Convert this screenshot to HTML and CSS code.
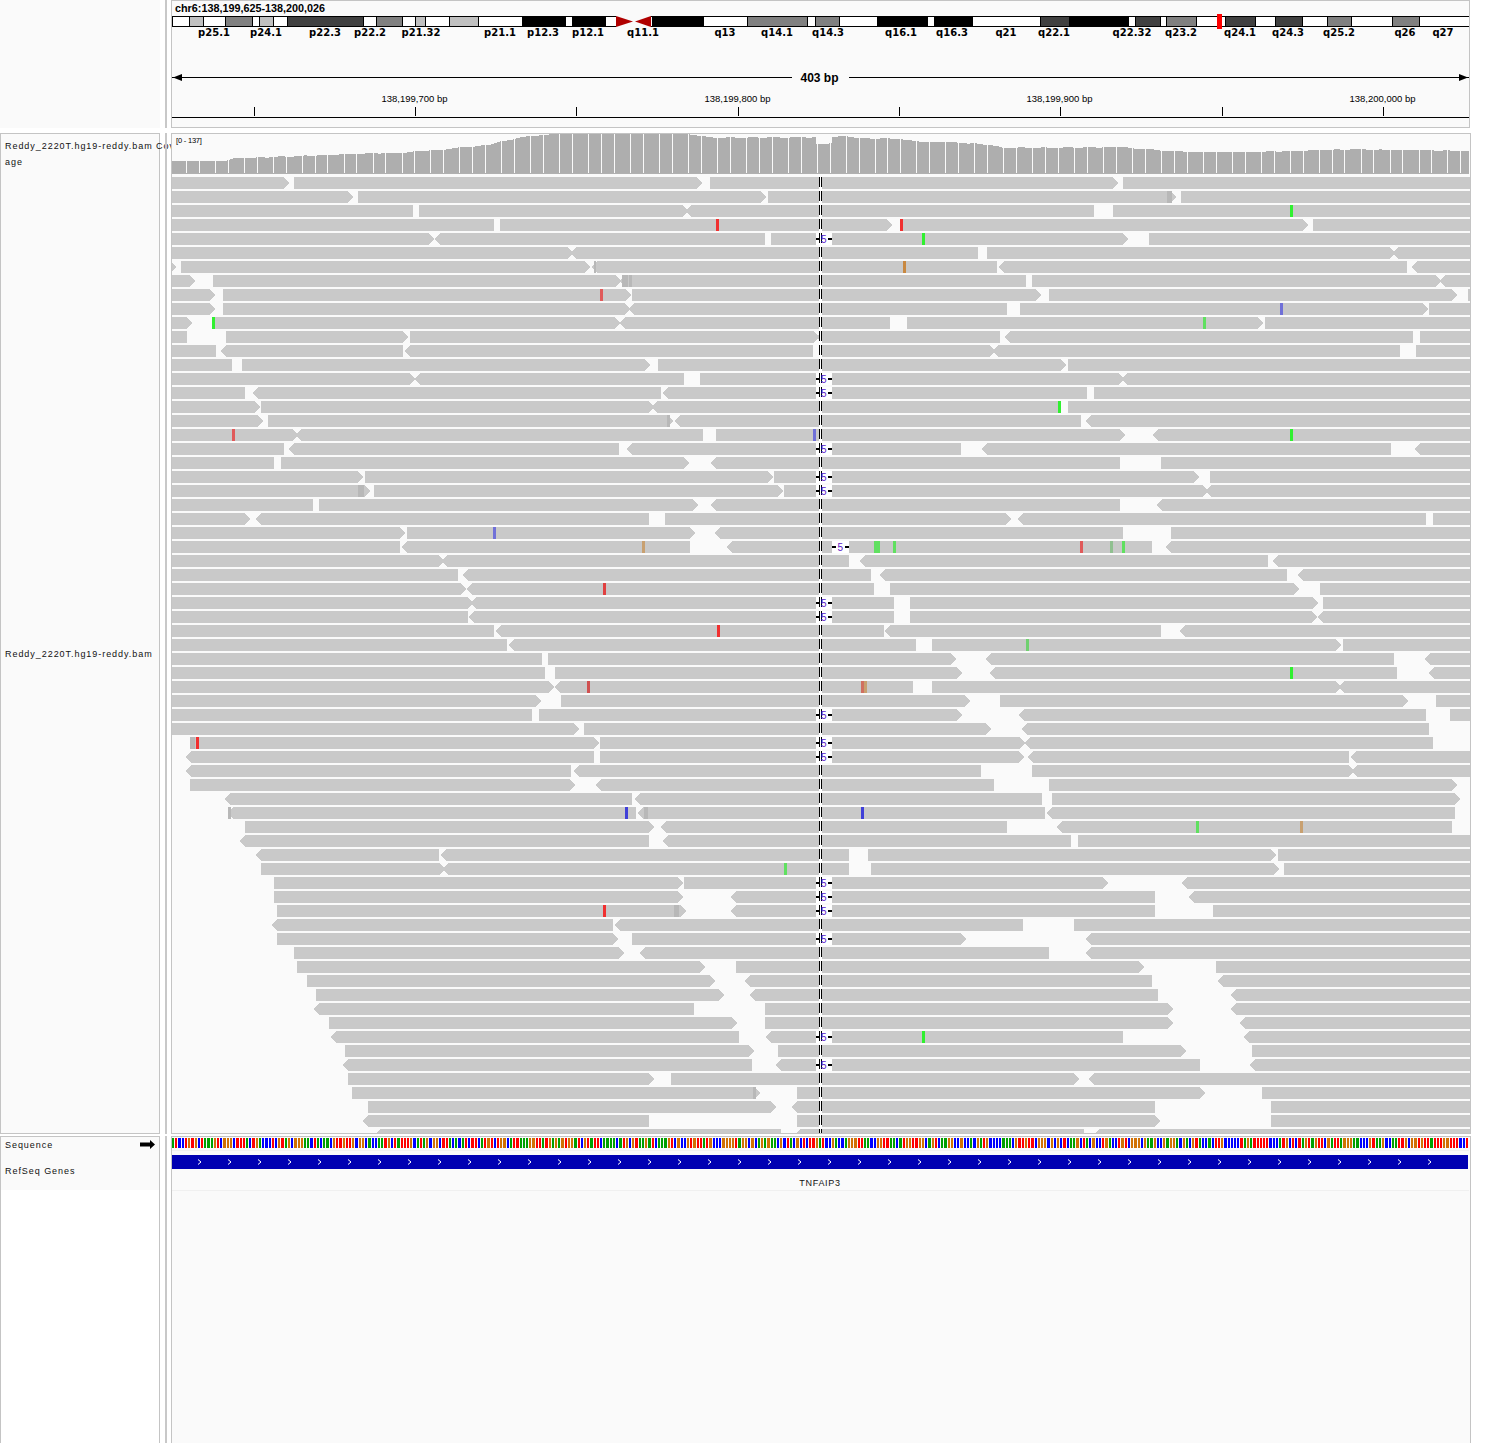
FILE: index.html
```html
<!DOCTYPE html>
<html>
<head>
    <title>IGV - TNFAIP3</title>
    <link rel="stylesheet" href="styles.css">
</head>
<body>
    <!-- Ideogram and ruler -->
    <div class="igv-row header-row">
        <div class="name-panel no-border"></div>
        <div class="divider"></div>
        <div class="data-panel header-panel">
            <svg id="header-canvas" class="canvas" viewBox="172 1 1297 126"></svg>
        </div>
    </div>

    <!-- Coverage and alignments -->
    <div class="igv-row reads-row">
        <div class="name-panel">
            <div class="track-name coverage-name">Reddy_2220T.hg19-reddy.bam Cov<br>age</div>
            <div class="track-name alignment-name">Reddy_2220T.hg19-reddy.bam</div>
        </div>
        <div class="divider"></div>
        <div class="data-panel">
            <svg id="reads-canvas" class="canvas" viewBox="172 134 1298 999"></svg>
        </div>
    </div>

    <!-- Sequence and genes -->
    <div class="igv-row feature-row">
        <div class="name-panel no-bottom">
            <div class="feature-names">
                <div class="track-name sequence-name">
                    <span>Sequence</span>
                    <svg class="strand-arrow" viewBox="0 0 15 9">
                        <polygon points="0,2.5 10,2.5 10,0 15,4.5 10,9 10,6.5 0,6.5"></polygon>
                    </svg>
                </div>
                <div class="track-name refseq-name">RefSeq Genes</div>
            </div>
        </div>
        <div class="divider"></div>
        <div class="data-panel no-bottom">
            <svg id="feature-canvas" class="canvas" viewBox="172 1137 1298 306"></svg>
        </div>
    </div>

    <script src="reads.js"></script>
</body>
</html>
```

FILE: styles.css
```css
html,
body {
    margin: 0;
    padding: 0;
    background-color: #fff;
    overflow: hidden;
}

body {
    font-family: "Liberation Sans", Arial, sans-serif;
    height: 1443px;
    color: #111;
}

.igv-row {
    display: flex;
}

.header-row {
    height: 128px;
}

.reads-row {
    height: 1001px;
    margin-top: 5px;
}

.feature-row {
    height: 307px;
    margin-top: 2px;
}

.name-panel {
    box-sizing: border-box;
    width: 160px;
    flex: none;
    display: flex;
    flex-direction: column;
    background-color: #fafafa;
    border: 1px solid #c4c4c4;
}

.name-panel.no-border {
    border: none;
}

.feature-row .name-panel {
    background-color: #fff;
}

.divider {
    width: 2px;
    flex: none;
    margin: 0 4px 0 5px;
    background-color: #c8c8c8;
}

.data-panel {
    box-sizing: border-box;
    width: 1300px;
    flex: none;
    position: relative;
    z-index: 1;
    background-color: #fafafa;
    border: 1px solid #c4c4c4;
    overflow: hidden;
}

.header-panel {
    width: 1299px;
}

.no-bottom {
    border-bottom: none;
}

.canvas {
    display: block;
    width: 100%;
    height: 100%;
}

/* Track names */
.track-name {
    font-size: 9px;
    line-height: 16px;
    letter-spacing: 0.95px;
    padding-left: 4px;
    white-space: nowrap;
    color: #111;
}

.coverage-name {
    height: 36px;
    padding-top: 4px;
}

.alignment-name {
    flex: 1;
    display: flex;
    align-items: center;
}

.feature-names {
    height: 53px;
    background-color: #fafafa;
}

.sequence-name {
    display: flex;
    justify-content: space-between;
    align-items: center;
    height: 15px;
    padding-right: 4px;
}

.strand-arrow {
    width: 15px;
    height: 9px;
}

.refseq-name {
    padding-top: 11px;
}

/* Header canvas */
.chrom-title {
    font-size: 10.8px;
    font-weight: bold;
}

.band-label {
    font-family: "DejaVu Sans", sans-serif;
    font-size: 10px;
    font-weight: bold;
    text-anchor: middle;
}

.span-label {
    font-size: 12px;
    font-weight: bold;
    text-anchor: middle;
}

.ruler-label {
    font-size: 9.5px;
    text-anchor: middle;
}

/* Coverage and reads */
.range-label {
    font-size: 7.5px;
    letter-spacing: -0.2px;
    fill: #000;
}

.deletion-count {
    font-size: 10px;
    text-anchor: middle;
    fill: #5a20c8;
}

.gene-label {
    font-size: 9px;
    letter-spacing: 0.7px;
    text-anchor: middle;
    fill: #111;
}
```

FILE: reads.js
```js
// Draws the IGV tracks from the data below. All x values are page pixels.
const NS = 'http://www.w3.org/2000/svg';
const LEFT = 172;
const BP_WIDTH = 1297 / 403;
const READ_FILL = '#c9c9c9';

function add(svg, tag, attrs, text) {
    const el = document.createElementNS(NS, tag);
    for (const key in attrs) {
        el.setAttribute(key, attrs[key]);
    }
    if (text) {
        el.textContent = text;
    }
    svg.appendChild(el);
    return el;
}

function box(svg, x, y, w, h, fill) {
    return add(svg, 'rect', { x: x, y: y, width: w, height: h, fill: fill, 'shape-rendering': 'crispEdges' });
}

// ---- Ideogram ----
const SHADES = { w: '#fff', l: '#c0c0c0', m: '#808080', d: '#404040', k: '#000' };

const BANDS = [
    [189, 'w'], [203, 'l'], [225, 'w'], [252, 'm'], [259, 'w'], [273, 'l'], [287, 'w'], [363, 'd'],
    [376, 'w'], [402, 'm'], [415, 'w'], [425, 'l'], [449, 'w'], [478, 'l'], [522, 'w'], [565, 'k'],
    [572, 'w'], [605, 'k'], [616, 'w'], [651, null], [703, 'k'], [747, 'w'], [807, 'm'], [815, 'w'],
    [839, 'm'], [877, 'w'], [927, 'k'], [934, 'w'], [972, 'k'], [1040, 'w'], [1069, 'd'], [1070, 'w'],
    [1128, 'k'], [1135, 'w'], [1160, 'd'], [1166, 'w'], [1196, 'm'], [1225, 'w'], [1255, 'd'], [1275, 'w'],
    [1302, 'd'], [1327, 'w'], [1351, 'm'], [1392, 'w'], [1419, 'm'], [1469, 'w']
];

const BAND_LABELS = [
    ['p25.1', 214], ['p24.1', 266], ['p22.3', 325], ['p22.2', 370], ['p21.32', 421], ['p21.1', 500],
    ['p12.3', 543], ['p12.1', 588], ['q11.1', 643], ['q13', 725], ['q14.1', 777], ['q14.3', 828],
    ['q16.1', 901], ['q16.3', 952], ['q21', 1006], ['q22.1', 1054], ['q22.32', 1132], ['q23.2', 1181],
    ['q24.1', 1240], ['q24.3', 1288], ['q25.2', 1339], ['q26', 1405], ['q27', 1443]
];

function drawHeader(svg) {
    add(svg, 'text', { x: 175, y: 12, class: 'chrom-title' }, 'chr6:138,199,625-138,200,026');

    let start = LEFT;
    BANDS.forEach(function (band) {
        const end = band[0];
        if (band[1]) {
            box(svg, start + 1, 17, end - start - 1, 9, SHADES[band[1]]);
            if (end < 1469) {
                box(svg, end, 17, 1, 9, '#000');
            }
        }
        start = end;
    });
    // top and bottom edges stop at the centromere
    [[LEFT, 444], [651, 818]].forEach(function (edge) {
        box(svg, edge[0], 16, edge[1], 1, '#000');
        box(svg, edge[0], 26, edge[1], 1, '#000');
    });
    box(svg, LEFT, 17, 1, 9, '#000');

    // Centromere
    add(svg, 'polygon', { points: '616,16 616,27 633,21.5', fill: '#b00000' });
    add(svg, 'polygon', { points: '651,16 651,27 635,21.5', fill: '#b00000' });

    // Current locus marker
    box(svg, 1217, 14, 5, 15, '#ff0000');

    BAND_LABELS.forEach(function (label) {
        add(svg, 'text', { x: label[1], y: 36, class: 'band-label' }, label[0]);
    });

    // Span line
    box(svg, LEFT, 77, 620, 1, '#000');
    box(svg, 849, 77, 620, 1, '#000');
    add(svg, 'polygon', { points: '173,77.5 182,74 182,81', fill: '#000' });
    add(svg, 'polygon', { points: '1468,77.5 1459,74 1459,81', fill: '#000' });
    add(svg, 'text', { x: 819.5, y: 82, class: 'span-label' }, '403 bp');

    // Ruler
    box(svg, LEFT, 117, 1297, 1, '#000');
    [254, 415, 576, 738, 899, 1060, 1222, 1383].forEach(function (x) {
        box(svg, x, 107, 1, 9, '#000');
    });
    [[414.5, '138,199,700 bp'], [737.5, '138,199,800 bp'], [1059.5, '138,199,900 bp'], [1382.5, '138,200,000 bp']].forEach(function (t) {
        add(svg, 'text', { x: t[0], y: 102, class: 'ruler-label' }, t[1]);
    });
}

// ---- Coverage ----
// x, top of the bars
const COVERAGE = [
    [172, 161], [220, 161], [230, 158.7], [280, 156.7], [320, 155], [350, 154], [400, 152.7], [420, 150.7],
    [440, 150], [465, 146.7], [480, 146], [498, 142], [520, 137.3], [540, 135], [565, 133.8], [680, 134],
    [695, 135], [710, 137.7], [812, 137.3], [815, 137.3], [816, 144], [828, 144], [832, 137], [845, 136],
    [860, 138.7], [880, 138.3], [900, 139.3], [920, 141.7], [940, 142], [970, 143.5], [990, 145], [1000, 147.7],
    [1040, 147.7], [1100, 147.3], [1125, 147], [1135, 149], [1150, 149.3], [1160, 150.7], [1185, 151.7],
    [1220, 152], [1250, 152], [1300, 150.7], [1350, 149.3], [1400, 150], [1469, 151]
];

function coverageTop(x) {
    for (let i = 1; i < COVERAGE.length; i++) {
        const a = COVERAGE[i - 1];
        const b = COVERAGE[i];
        if (x <= b[0]) {
            return a[1] + (b[1] - a[1]) * (x - a[0]) / (b[0] - a[0]);
        }
    }
    return 151;
}

function drawCoverage(svg) {
    for (let i = 0; i < 403; i++) {
        const x = Math.round(LEFT + i * BP_WIDTH);
        const next = Math.round(LEFT + (i + 1) * BP_WIDTH);
        const wobble = Math.sin(i * 0.9) * 0.3;
        const top = Math.round(coverageTop(x) + wobble);
        box(svg, x, top, next - x, 173 - top, '#aeaeae');
    }
    // the coverage bars break up every four or five bases
    for (let k = 1; k < 91; k++) {
        const base = Math.floor(k * 4.45);
        box(svg, Math.round(LEFT + 1 + base * BP_WIDTH), 134, 1, 39, '#fafafa');
    }
    box(svg, LEFT, 173, 1297, 1, '#b0b0b0');
    add(svg, 'text', { x: 176, y: 143, class: 'range-label' }, '[0 - 137]');
}

// ---- Reads ----
// One string per row. "<a-b" points left, "a-b>" points right.
const ROWS = [
    '171-289> 294-702> 710-1118> 1123-1470',
    '171-353> 358-766> 768-1176> 1181-1470',
    '171-413 419-688> <686-1094 1113-1470',
    '171-494 500-892> 900-1308> 1313-1470',
    '171-434> <435-765 771-816 832-1128> 1149-1470',
    '171-573> <571-978 987-1395> <1393-1470',
    '171-176> 181-590> <592-997 <999-1407 <1412-1470',
    '171-195> 213-621> <620-1026 1032-1441> <1440-1470',
    '171-215> 223-631> 632-1041> 1049-1457> 1468-1470',
    '171-215> 223-630> <629-1007 1020-1428> 1429-1470',
    '171-192> 212-620> <620-890 907-1263> 1265-1470',
    '171-187 226-408> 410-819> <817-1000 <1005-1413 1420-1470',
    '171-216 <221-403 <405-813 820-995> <993-1400 1416-1470',
    '171-232 242-650> 658-1066> 1068-1470',
    '171-415> <415-684 700-816 832-1124> <1122-1470',
    '171-245 <253-661 <663-816 832-1087 1094-1470',
    '171-260> 261-654> <652-1061 1068-1470',
    '171-263> 268-673> <675-1081 <1086-1470',
    '171-298> <296-703 716-1125> <1153-1470',
    '171-284 <289-619 <627-816 832-961 <982-1391 <1415-1470',
    '171-274 281-689> <711-1120 1161-1470',
    '171-363> 365-773> 774-816 832-1199> 1210-1470',
    '171-370> 374-783> 784-816 832-1208> <1206-1470',
    '171-313 319-698> <711-1120 <1157-1470',
    '171-250> <256-649 665-1011> <1018-1426 1433-1470',
    '171-405> 407-695> <715-1123 1171-1470',
    '171-400 <402-690 <727-832 849-1152 <1166-1470',
    '171-444> <442-849 <860-1268 <1273-1470',
    '171-458 <463-871 <880-1287 <1298-1470',
    '171-466> <467-874 890-1299> 1320-1470',
    '171-473> <471-816 832-894 910-1318> 1323-1470',
    '171-468 <469-816 832-894 910-1317> <1318-1470',
    '171-494 <496-884 <885-1161 <1180-1470',
    '171-507 <509-916 932-1341> 1343-1470',
    '171-542 548-956> <986-1394 <1425-1470',
    '171-545 555-962> <990-1397 <1429-1470',
    '171-554> <555-913 932-1341> <1339-1470',
    '171-541> 561-970> 1000-1408> 1436-1470',
    '171-532 539-816 832-962> <1019-1426 1450-1470',
    '171-579> 584-991> <1022-1429',
    '190-599> 600-816 832-1025> <1025-1433',
    '<186-594 600-816 832-1024> <1028-1349 <1351-1470',
    '<186-571 <574-981 1032-1354> <1352-1470',
    '190-575> <596-994 1049-1457>',
    '<225-632 <635-1042 1052-1460>',
    '<228-636 <638-1045 <1047-1455',
    '245-654> <661-1007 <1057-1452',
    '<240-649 <663-1071 1078-1470',
    '<256-439 <441-849 868-1276> 1278-1470',
    '261-445> <443-849 871-1279> 1284-1470',
    '274-683> 684-816 832-1108> <1182-1470',
    '274-683> <731-816 832-1155 <1189-1470',
    '277-686> <731-816 832-1155 1213-1470',
    '<272-613 <615-1023 1074-1470',
    '277-618> 632-816 832-966> <1086-1470',
    '294-624> <640-1049 <1086-1470',
    '297-705> 736-1144> 1216-1470',
    '307-715> <745-1152 <1218-1470',
    '316-724> <750-1158 <1231-1470',
    '<314-694 765-1173> <1231-1470',
    '329-737> 765-1173> <1240-1470',
    '<331-739 <766-816 832-1123 <1244-1470',
    '345-754> 778-1186> 1252-1470',
    '<343-752 <776-816 832-1200 <1250-1470',
    '348-654> 671-1079> <1089-1470',
    '352-760> 797-1205> 1262-1470',
    '368-776> <792-1155 1271-1470',
    '<363-649 797-1160> 1271-1470',
    '<375-781 <795-1084 <1094-1470'
];

const RED = '#f03030';
const SOFT_RED = '#e05a5a';
const GREEN = '#30f030';
const SOFT_GREEN = '#60e060';
const BLUE = '#4040d8';
const PURPLE = '#7070d8';
const ORANGE = '#c88840';
const TAN = '#c8a070';
const GRAY = '#b8b8b8';

// row, x, colour, width (3 if left out)
const MISMATCHES = [
    [1, 1167, GRAY, 5], [2, 1290, GREEN], [3, 716, RED], [3, 900, RED], [4, 922, GREEN], [6, 594, GRAY, 2],
    [6, 903, ORANGE], [7, 622, GRAY, 6], [7, 629, GRAY], [8, 600, SOFT_RED], [9, 1280, PURPLE], [10, 212, GREEN],
    [10, 1203, SOFT_GREEN], [16, 1058, GREEN], [17, 667, GRAY], [18, 232, SOFT_RED], [18, 813, PURPLE], [18, 1290, GREEN],
    [22, 358, GRAY, 6], [25, 493, PURPLE], [26, 642, TAN], [26, 874, SOFT_GREEN, 6], [26, 893, SOFT_GREEN],
    [26, 1080, SOFT_RED], [26, 1110, '#90c090'], [26, 1122, SOFT_GREEN], [29, 603, '#e04040'], [32, 717, RED],
    [33, 1026, '#70d070'], [35, 1290, GREEN], [36, 587, '#d05050'], [36, 861, '#d07060'], [36, 864, TAN],
    [40, 190, GRAY, 5], [40, 196, RED], [45, 228, GRAY, 3], [45, 625, BLUE], [45, 644, GRAY, 4], [45, 861, BLUE],
    [46, 1196, SOFT_GREEN], [46, 1300, TAN], [49, 784, SOFT_GREEN], [52, 603, RED], [52, 674, GRAY, 5],
    [61, 922, GREEN], [65, 753, GRAY]
];

// row, x, width of the gap
const DELETIONS = [
    [4, 816, 16], [14, 816, 16], [15, 816, 16], [19, 816, 16], [21, 816, 16], [22, 816, 16], [26, 832, 17],
    [30, 816, 16], [31, 816, 16], [38, 816, 16], [40, 816, 16], [41, 816, 16], [50, 816, 16], [51, 816, 16],
    [52, 816, 16], [54, 816, 16], [61, 816, 16], [63, 816, 16]
];

function rowTop(row) {
    return 177 + row * 14;
}

function drawRead(svg, token, top) {
    const m = token.match(/^(<?)(\d+)-(\d+)(>?)$/);
    const a = Number(m[2]);
    const b = Number(m[3]);
    const tip = 5;
    const bottom = top + 12;
    const left = m[1] ? (a + tip) + ',' + top + ' ' + a + ',' + (top + 6) + ' ' + (a + tip) + ',' + bottom
                      : a + ',' + top + ' ' + a + ',' + bottom;
    const right = m[4] ? (b - tip) + ',' + bottom + ' ' + b + ',' + (top + 6) + ' ' + (b - tip) + ',' + top
                       : b + ',' + bottom + ' ' + b + ',' + top;
    add(svg, 'polygon', { points: left + ' ' + right, fill: READ_FILL, 'shape-rendering': 'crispEdges' });
}

function drawReads(svg) {
    ROWS.forEach(function (row, i) {
        row.split(' ').forEach(function (token) {
            drawRead(svg, token, rowTop(i));
        });
    });
    MISMATCHES.forEach(function (m) {
        box(svg, m[1], rowTop(m[0]), m[3] || 3, 12, m[2]);
    });
    DELETIONS.forEach(function (d) {
        const top = rowTop(d[0]);
        box(svg, d[1], top, d[2], 12, '#fff');
        box(svg, d[1], top + 5, 4, 2, '#000');
        box(svg, d[1] + d[2] - 4, top + 5, 4, 2, '#000');
    });

    // center lines, black dashes on a white strip
    box(svg, 819, 177, 3, 956, '#fff');
    [819, 821].forEach(function (x) {
        add(svg, 'line', {
            x1: x + 0.5, y1: 177, x2: x + 0.5, y2: 1133,
            stroke: '#000', 'stroke-dasharray': '10 4', 'shape-rendering': 'crispEdges'
        });
    });

    // the count of deleted bases sits on top of the lines
    DELETIONS.forEach(function (d) {
        add(svg, 'text', { x: d[1] + d[2] / 2 - 0.3, y: rowTop(d[0]) + 10, class: 'deletion-count' }, '5');
    });
}

// ---- Sequence and gene ----
const BASE_COLORS = ['#00a000', '#0000ff', '#d17105', '#ff0000'];

function drawFeatures(svg) {
    let seed = 2220;
    for (let i = 0; i < 403; i++) {
        seed = (seed * 1103515245 + 12345) % 2147483648;
        const x = Math.round(LEFT + i * BP_WIDTH);
        const next = Math.round(LEFT + (i + 1) * BP_WIDTH);
        box(svg, x, 1138, next - x - 1, 10, BASE_COLORS[(seed >> 16) & 3]);
    }
    box(svg, LEFT, 1150, 1297, 1, '#f0f0f0');

    box(svg, LEFT, 1155, 1296, 14, '#0000b2');
    for (let x = 198; x < 1440; x += 30) {
        add(svg, 'polyline', {
            points: x + ',1159.5 ' + (x + 3) + ',1162 ' + x + ',1164.5',
            fill: 'none', stroke: '#fff', 'stroke-width': 1
        });
    }
    add(svg, 'text', { x: 820, y: 1186, class: 'gene-label' }, 'TNFAIP3');
    box(svg, LEFT, 1190, 1297, 1, '#f0f0f0');
}

drawHeader(document.getElementById('header-canvas'));
const readsCanvas = document.getElementById('reads-canvas');
drawCoverage(readsCanvas);
drawReads(readsCanvas);
drawFeatures(document.getElementById('feature-canvas'));
```
